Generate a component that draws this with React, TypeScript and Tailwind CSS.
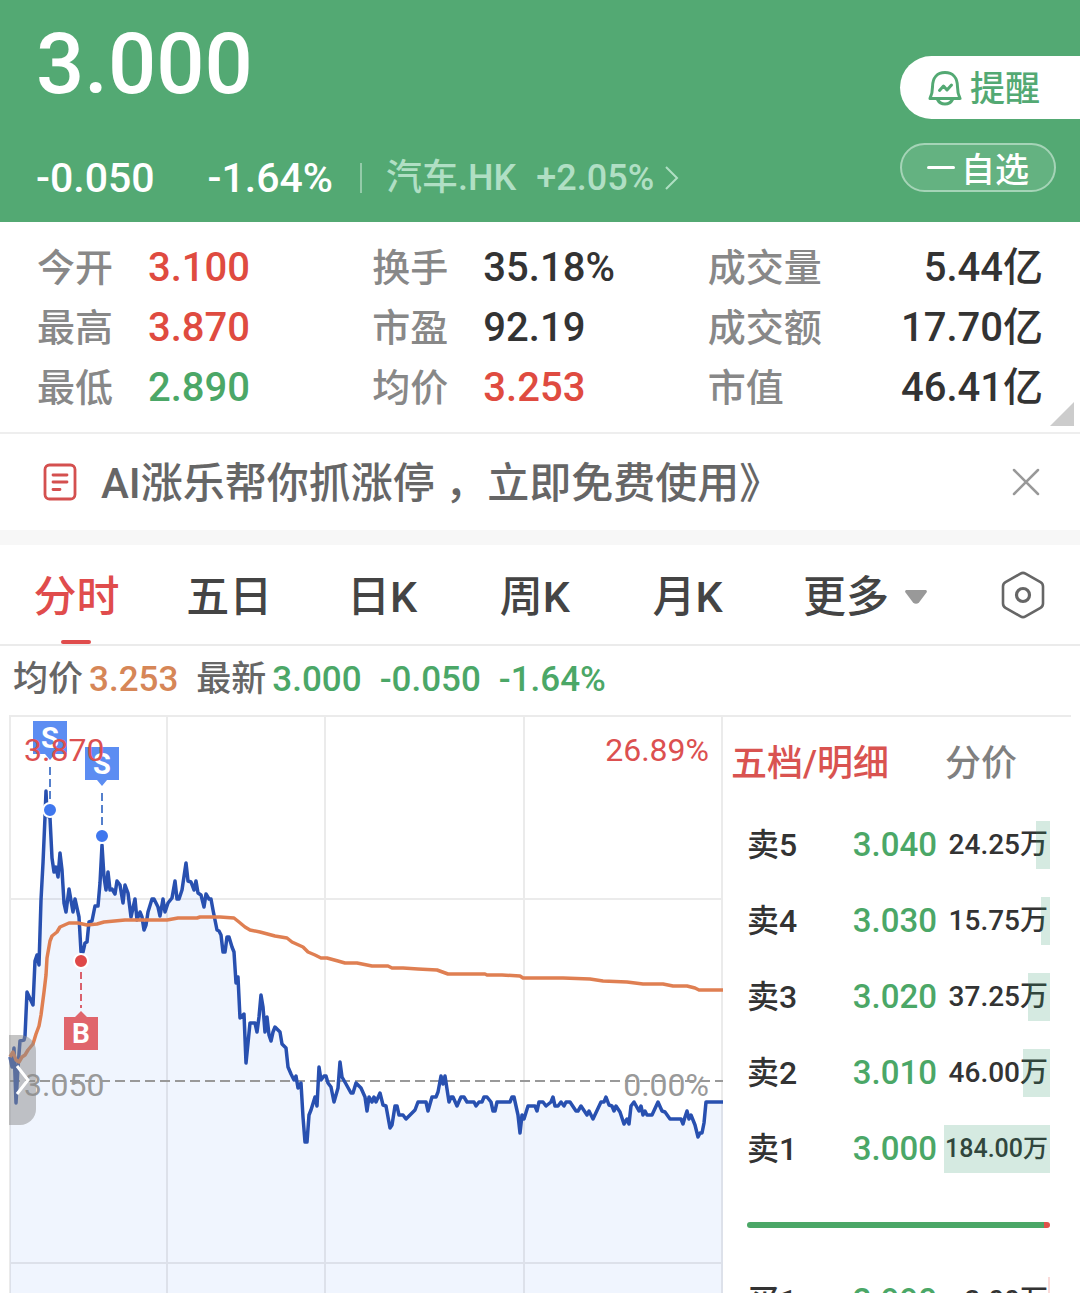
import React, { useState } from "react";
import clsx from "clsx";

type Tone = "up" | "down" | "normal";

interface Stat {
  label: string;
  value: string;
  tone: Tone;
}

interface Order {
  label: string;
  price: string;
  volume: string;
  bar: number;
  side: "sell" | "buy";
  small?: boolean;
}

const toneClass: Record<Tone, string> = {
  up: "text-[#df4b40]",
  down: "text-[#4ba767]",
  normal: "text-[#333333]",
};

const stats: Stat[][] = [
  [
    { label: "今开", value: "3.100", tone: "up" },
    { label: "最高", value: "3.870", tone: "up" },
    { label: "最低", value: "2.890", tone: "down" },
  ],
  [
    { label: "换手", value: "35.18%", tone: "normal" },
    { label: "市盈", value: "92.19", tone: "normal" },
    { label: "均价", value: "3.253", tone: "up" },
  ],
  [
    { label: "成交量", value: "5.44亿", tone: "normal" },
    { label: "成交额", value: "17.70亿", tone: "normal" },
    { label: "市值", value: "46.41亿", tone: "normal" },
  ],
];

const periods = ["分时", "五日", "日K", "周K", "月K"];

// bar = width of the depth bar in px
const sells: Order[] = [
  { label: "卖5", price: "3.040", volume: "24.25万", bar: 14, side: "sell" },
  { label: "卖4", price: "3.030", volume: "15.75万", bar: 9, side: "sell" },
  { label: "卖3", price: "3.020", volume: "37.25万", bar: 22, side: "sell" },
  { label: "卖2", price: "3.010", volume: "46.00万", bar: 27, side: "sell" },
  { label: "卖1", price: "3.000", volume: "184.00万", bar: 106, side: "sell", small: true },
];

const buys: Order[] = [
  { label: "买1", price: "2.990", volume: "3.00万", bar: 2, side: "buy" },
];

const pricePoints =
  "10,1057 12,1067 14,1048 16,1103 18,1067 20,1041 24,1040 25,1036 27,992 33,1005 35,961 37,955 39,965 41,900 43,863 45,817 46,791 47,815 50,818 52,858 54,872 56,867 58,877 60,853 62,870 64,903 66,912 69,889 73,912 75,899 79,917 81,952 83,952 85,943 87,942 89,922 92,921 95,906 98,906 100,883 102,845 104,877 106,890 108,872 110,890 112,889 115,894 117,881 120,885 123,903 125,885 128,893 131,917 135,899 137,920 140,912 142,917 144,930 146,925 148,912 152,899 154,899 158,907 160,916 163,899 165,912 168,903 172,898 175,881 177,899 179,899 182,890 186,863 188,881 191,882 194,890 196,881 198,893 201,895 204,907 206,894 209,899 211,899 213,910 217,930 219,931 221,935 223,952 225,952 227,937 229,937 232,947 234,952 236,983 238,977 240,1018 244,1014 246,1063 250,1023 255,1023 257,1032 259,1017 261,995 263,1007 265,1032 267,1017 269,1035 271,1041 273,1032 275,1027 280,1032 282,1044 286,1048 288,1067 291,1074 294,1080 296,1076 298,1088 301,1083 303,1117 305,1142 307,1142 309,1115 311,1110 315,1097 317,1106 319,1067 321,1080 324,1076 326,1076 328,1083 331,1087 334,1102 338,1088 340,1062 342,1077 346,1084 351,1093 353,1093 356,1083 361,1088 365,1097 367,1111 369,1097 372,1102 374,1097 376,1102 380,1093 383,1105 386,1106 390,1128 392,1125 395,1106 397,1106 399,1115 403,1115 406,1119 410,1115 415,1110 418,1102 426,1102 428,1111 432,1097 436,1097 438,1092 441,1076 443,1084 445,1076 449,1102 451,1097 453,1097 457,1106 461,1097 464,1097 467,1102 474,1102 476,1106 479,1102 482,1102 484,1097 487,1097 491,1102 493,1111 495,1111 497,1102 510,1102 512,1097 514,1097 518,1115 520,1133 522,1115 524,1119 528,1106 535,1106 537,1111 539,1102 543,1102 546,1106 551,1102 553,1097 555,1106 558,1106 561,1102 564,1106 566,1102 570,1102 576,1111 578,1111 581,1106 587,1115 589,1111 593,1119 601,1102 604,1102 606,1097 609,1105 612,1106 614,1111 616,1106 620,1112 624,1124 627,1119 629,1124 631,1106 634,1102 639,1111 641,1106 643,1115 645,1111 647,1115 652,1115 658,1102 662,1111 665,1112 670,1119 681,1119 683,1124 685,1117 687,1111 689,1119 691,1115 695,1125 698,1137 700,1133 702,1133 704,1123 706,1102 723,1102";

const averagePoints =
  "10,1057 13,1052 16,1060 19,1062 22,1057 25,1055 28,1050 33,1044 36,1034 39,1026 41,1015 44,992 46,975 47,958 50,941 52,936 57,932 60,927 69,923 78,923 87,925 97,924 104,922 125,920 167,920 178,918 197,918 200,917 220,917 234,918 239,922 245,927 250,930 260,932 275,936 287,938 292,942 303,947 308,952 315,955 321,958 327,958 338,961 345,963 357,963 372,966 388,966 392,968 403,968 418,969 437,970 448,974 485,974 487,975 502,975 520,976 523,978 563,978 590,979 603,981 627,982 643,984 663,984 673,986 687,986 695,988 699,990 723,990";

const BellIcon = () => (
  <svg width="34" height="36" viewBox="0 0 34 36" fill="none" stroke="#53a973" strokeWidth="3" strokeLinecap="round" strokeLinejoin="round" aria-hidden="true">
    <path d="M4.500 17C4.500 7.500 9.500 2.500 17 2.500S29.500 7.500 29.500 17c0 5 .8 8 2.500 11.500H2C3.700 25 4.500 22 4.500 17Z" />
    <path d="M9.500 29.500c1.500 3 4 4.500 7.500 4.500s6-1.500 7.500-4.500" />
    <path d="M11.500 20.500 15.500 16l3.500 4 4.500-5" />
  </svg>
);

const NewsIcon = () => (
  <svg width="34" height="38" viewBox="0 0 34 38" fill="none" stroke="#d4504f" strokeWidth="2.800" strokeLinecap="round" aria-hidden="true">
    <rect x="2" y="2" width="30" height="34" rx="4.500" />
    <path d="M10 12h14M10 19h14M10 26.500h7" />
  </svg>
);

const SettingIcon = () => (
  <svg width="44" height="48" viewBox="0 0 44 48" fill="none" stroke="#666666" strokeWidth="2.600" aria-hidden="true">
    <path d="M19.500 2.600a5 5 0 0 1 5 0l15 8.600a5 5 0 0 1 2.500 4.300v17a5 5 0 0 1-2.500 4.300l-15 8.600a5 5 0 0 1-5 0l-15-8.600a5 5 0 0 1-2.500-4.300v-17a5 5 0 0 1 2.500-4.300Z" />
    <circle cx="22" cy="24" r="6.500" strokeWidth="3.200" />
  </svg>
);

interface MarkerProps {
  x: number;
  top: number;
}

// sell flag hangs above its point on the line
const SellMarker: React.FC<MarkerProps> = ({ x, top }) => (
  <g>
    <path d={`M${x - 17} ${top}h34v33h-12l-5 6l-5-6h-12z`} fill="#5c8df2" />
    <text x={x} y={top + 27} fill="#ffffff" fontSize="29" fontWeight="700" textAnchor="middle">
      S
    </text>
    <path d={`M${x} ${top + 46}v37`} stroke="#5580cc" strokeWidth="2" strokeDasharray="8 4" />
    <circle cx={x} cy={top + 89} r="7" fill="#3f77ee" stroke="#ffffff" strokeWidth="2" />
  </g>
);

const BuyMarker: React.FC<MarkerProps> = ({ x, top }) => (
  <g>
    <circle cx={x} cy={top} r="7" fill="#df4848" stroke="#ffffff" strokeWidth="2" />
    <path d={`M${x} ${top + 11}v36`} stroke="#d9606c" strokeWidth="2" strokeDasharray="7 4" />
    <path d={`M${x} ${top + 50}l6 6h11v33h-34v-33h11z`} fill="#e0656c" />
    <text x={x} y={top + 82} fill="#ffffff" fontSize="28" fontWeight="700" textAnchor="middle">
      B
    </text>
  </g>
);

const MinuteChart = () => (
  <div className="relative min-w-0 flex-1">
    <svg viewBox="0 717 723 577" className="block w-full" role="img" aria-label="分时走势">
      <polygon points={`10,1294 ${pricePoints} 723,1294`} fill="#f0f5fe" />
      <path d="M10 716V1294M167 716V1294M325 716V1294M524 716V1294M722 716V1294M9 899H723M9 1263H723" stroke="#000000" strokeOpacity="0.080" strokeWidth="2" />
      <path d="M10 1081H723" stroke="#999999" strokeWidth="2" strokeDasharray="10 5" />
      <polyline points={pricePoints} fill="none" stroke="#2850b0" strokeWidth="3.500" strokeLinejoin="round" />
      <polyline points={averagePoints} fill="none" stroke="#df7f52" strokeWidth="3.500" strokeLinejoin="round" />
      <SellMarker x={50} top={721} />
      <SellMarker x={102} top={747} />
      <BuyMarker x={81} top={961} />
      <g fontSize="32" fontWeight="400">
        <text x="24" y="761" fill="#dc5050">3.870</text>
        <text x="709" y="761" fill="#dc5050" textAnchor="end">26.89%</text>
        <text x="24" y="1096" fill="#999999">3.050</text>
        <text x="709" y="1096" fill="#999999" textAnchor="end">0.00%</text>
      </g>
    </svg>
    <button
      type="button"
      aria-label="展开"
      className="absolute top-[318px] left-[9px] flex h-[90px] w-[27px] items-center justify-center rounded-r-2xl bg-[#8c8c8c]/50"
    >
      <svg width="15" height="30" viewBox="0 0 15 30" fill="none" stroke="#ffffff" strokeWidth="3" aria-hidden="true">
        <path d="M2 1l11 14L2 29" />
      </svg>
    </button>
  </div>
);

const OrderRow: React.FC<{ order: Order }> = ({ order }) => (
  <tr className="h-[76px]">
    <th scope="row" className="w-[80px] text-left text-[32px] leading-[48px] font-medium text-[#333333]">
      {order.label}
    </th>
    <td className="w-[110px] text-right text-[33px] leading-[48px] text-[#4ba767]">{order.price}</td>
    <td className={clsx("relative pr-[2px] text-right leading-[48px] text-[#333333]", order.small ? "text-[25px]" : "text-[28px]")}>
      {order.volume}
      <span
        className={clsx(
          "absolute top-[14px] right-0 h-12",
          order.side === "sell" ? "bg-[#2f9468]/20" : "bg-[#df4b40]/20"
        )}
        style={{ width: order.bar }}
      />
    </td>
  </tr>
);

const OrderBook = () => {
  const [tab, setTab] = useState("五档/明细");

  return (
    <aside className="w-[357px] shrink-0 pr-[30px] pl-2">
      <div className="flex h-[90px] items-center gap-14 pt-1 text-[36px] leading-[48px]">
        {["五档/明细", "分价"].map((name) => (
          <button
            key={name}
            type="button"
            onClick={() => setTab(name)}
            className={clsx("whitespace-nowrap", tab === name ? "text-[#d95350]" : "text-[#808080]")}
          >
            {name}
          </button>
        ))}
      </div>
      <div className="pl-4">
        <table className="w-full table-fixed border-collapse whitespace-nowrap">
          <tbody>
            {sells.map((order) => (
              <OrderRow key={order.label} order={order} />
            ))}
            <tr className="h-[76px]">
              <td colSpan={3}>
                <div className="flex h-[6px] overflow-hidden rounded-full">
                  <div className="flex-1 bg-[#4ba767]" />
                  <div className="w-[6px] bg-[#e0524b]" />
                </div>
              </td>
            </tr>
            {buys.map((order) => (
              <OrderRow key={order.label} order={order} />
            ))}
          </tbody>
        </table>
      </div>
    </aside>
  );
};

const App: React.FC = () => {
  const [period, setPeriod] = useState("分时");

  return (
    <main className="h-screen overflow-hidden bg-white font-['Roboto','Noto_Sans_CJK_SC',sans-serif] font-medium">
      <header className="flex justify-between bg-[#53a973] text-white">
        <div className="pt-6 pb-5 pl-9">
          <h1 className="text-[85px] leading-[80px] font-medium">3.000</h1>
          <div className="mt-[50px] flex items-center text-[41px] leading-[48px] whitespace-nowrap">
            <span>-0.050</span>
            <span className="ml-[53px]">-1.64%</span>
            <a href="#sector" className="ml-[27px] flex items-center text-[36px] text-[#b0dfc4]">
              <span className="mr-6 h-[30px] w-[2px] bg-[#94cba9]" />
              <span>汽车.HK</span>
              <span className="ml-5">+2.05%</span>
              <svg className="ml-[11px]" width="14" height="26" viewBox="0 0 14 26" fill="none" stroke="#b0dfc4" strokeWidth="2" aria-hidden="true">
                <path d="M1 2l11 11L1 24" />
              </svg>
            </a>
          </div>
        </div>
        <div className="flex w-[180px] shrink-0 flex-col gap-6 pt-14">
          <button type="button" className="flex h-[63px] items-center gap-2 rounded-l-full bg-white pl-7 text-[35px] leading-[48px] text-[#53a973]">
            <BellIcon />
            <span className="pt-1">提醒</span>
          </button>
          <button type="button" className="mr-6 flex h-[49px] items-center justify-center gap-[6px] rounded-full border-2 border-[#a5d4b7] bg-white/10 text-[34px] leading-[40px]">
            <span className="h-[3px] w-7 rounded-full bg-white" />
            <span className="pt-1">自选</span>
          </button>
        </div>
      </header>

      <section className="relative border-b-2 border-[#eeeeee] px-[37px] pt-4 pb-[14px]">
        <div className="grid grid-cols-3">
          {stats.map((column, index) => (
            <dl key={index}>
              {column.map((item) => (
                <div key={item.label} className="flex h-[60px] items-center whitespace-nowrap">
                  <dt className="min-w-[111px] text-[38px] leading-[60px] text-[#888888]">{item.label}</dt>
                  <dd className={clsx("text-[40px] leading-[60px]", toneClass[item.tone], index === 2 && "ml-auto")}>
                    {item.value}
                  </dd>
                </div>
              ))}
            </dl>
          ))}
        </div>
        <svg className="absolute right-[6px] bottom-[6px]" width="24" height="24" viewBox="0 0 24 24" aria-hidden="true">
          <path d="M24 0v24H0z" fill="#cccccc" />
        </svg>
      </section>

      <section className="flex h-24 items-center pr-10 pl-[43px]">
        <NewsIcon />
        <a href="#ai" className="ml-6 pt-1 text-[42px] leading-[60px] whitespace-nowrap text-[#666666]">
          AI涨乐帮你抓涨停 ，立即免费使用》
        </a>
        <button type="button" aria-label="关闭" className="ml-auto">
          <svg width="28" height="28" viewBox="0 0 28 28" fill="none" stroke="#999999" strokeWidth="2.500" strokeLinecap="round" aria-hidden="true">
            <path d="M2 2l24 24M26 2L2 26" />
          </svg>
        </button>
      </section>

      <div className="h-[15px] bg-[#f7f7f7]" />

      <nav className="grid h-[101px] grid-cols-[repeat(5,minmax(0,1fr))_202px_114px] border-b-2 border-[#ebebeb] text-[43px] leading-[60px] text-[#444444]">
        {periods.map((name) => (
          <button
            key={name}
            type="button"
            onClick={() => setPeriod(name)}
            className={clsx("relative pt-1 whitespace-nowrap", period === name && "text-[#e04c4c]")}
          >
            {name}
            {period === name && (
              <span className="absolute bottom-0 left-1/2 h-1 w-[30px] -translate-x-1/2 rounded-full bg-[#e04c4c]" />
            )}
          </button>
        ))}
        <button type="button" aria-haspopup="menu" className="flex items-center justify-center gap-4 pt-1 whitespace-nowrap">
          更多
          <svg width="22" height="14" viewBox="0 0 22 14" aria-hidden="true">
            <path d="M1 0h20q1.500 1 .5 2.500L14 12.500q-3 2.500-6 0L.5 2.500Q-.5 1 1 0Z" fill="#999999" />
          </svg>
        </button>
        <button type="button" aria-label="设置" className="flex items-center justify-center">
          <SettingIcon />
        </button>
      </nav>

      <div className="flex h-[69px] items-center pb-[2px] pl-[13px] text-[35px] leading-[60px] whitespace-nowrap text-[#4ba767]">
        <span className="text-[#666666]">均价</span>
        <span className="ml-[6px] text-[#d68657]">3.253</span>
        <span className="ml-[18px] text-[#666666]">最新</span>
        <span className="ml-[6px]">3.000</span>
        <span className="ml-[18px]">-0.050</span>
        <span className="ml-[18px]">-1.64%</span>
      </div>

      <div className="mr-[9px] ml-[9px] h-[2px] bg-[#ebebeb]" />
      <section className="flex">
        <MinuteChart />
        <OrderBook />
      </section>
    </main>
  );
};

export default App;
